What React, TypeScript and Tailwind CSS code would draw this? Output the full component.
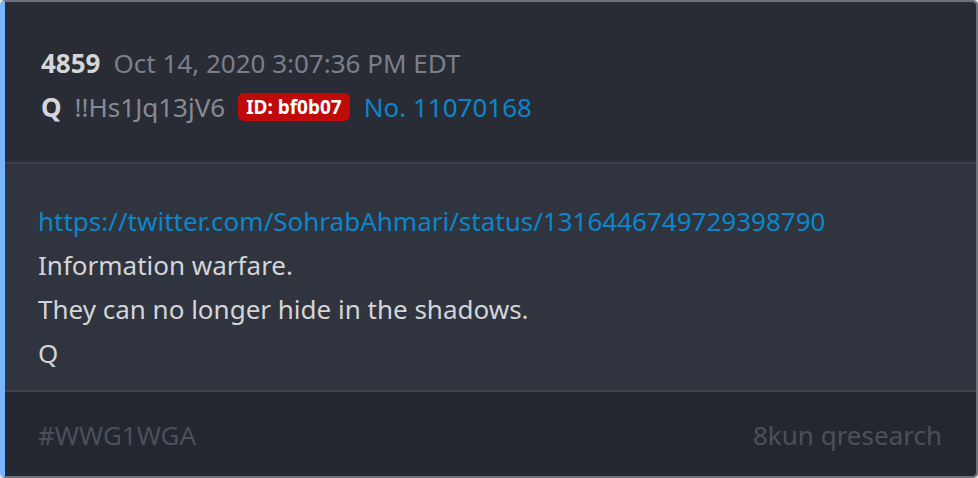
export default function App() {
  return (
    <div className="h-[478px] w-[978px] bg-[#e8e8ea] font-['Noto_Sans',sans-serif]">
      <div className="flex h-[478px] w-[978px] flex-col overflow-hidden rounded-[5px] border-2 border-l-[5px] border-[#6e717a] border-l-[#7ab6ff]">
        {/* Header */}
        <div className="flex h-[160px] flex-col bg-[#292c35] pl-[36px] pt-[39px] text-[26px] leading-[44px]">
          <div className="flex items-center">
            <span className="font-bold text-[#d5d6d9]">4859</span>
            <span className="ml-[13px] text-[#7b7f8b]">Oct 14, 2020 3:07:36 PM EDT</span>
          </div>
          <div className="flex items-center">
            <span className="font-bold text-[#d5d6d9]">Q</span>
            <span className="ml-[13px] text-[#868a95]">!!Hs1Jq13jV6</span>
            <span className="ml-[13px] rounded-[6px] bg-[#bf0a0a] px-[8px] text-[19px] font-bold leading-[28px] text-white">
              ID: bf0b07
            </span>
            <span className="ml-[14px] text-[#0b86cb]">No. 11070168</span>
          </div>
        </div>
        <div className="h-[2px] bg-[#3d414a]" />
        {/* Body */}
        <div className="flex h-[226px] flex-col bg-[#2f343e] pl-[33px] pt-[35px] text-[26px] leading-[44px] text-[#d3d5d9]">
          <a className="text-[#0b86cb]">https://twitter.com/SohrabAhmari/status/1316446749729398790</a>
          <span>Information warfare.</span>
          <span>They can no longer hide in the shadows.</span>
          <span>Q</span>
        </div>
        <div className="h-[2px] bg-[#3d414a]" />
        {/* Footer */}
        <div className="flex flex-1 items-center justify-between bg-[#24272f] pl-[33px] pr-[34px] pt-[3px] text-[26px] text-[#4b505b]">
          <span>#WWG1WGA</span>
          <span>8kun qresearch</span>
        </div>
      </div>
    </div>
  );
}
